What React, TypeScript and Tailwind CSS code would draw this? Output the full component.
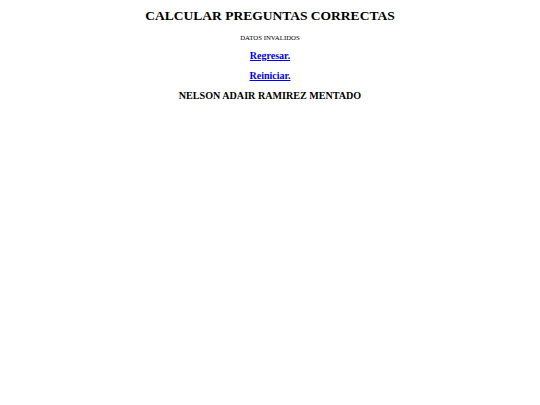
export default function App() {
  return (
    <div className="min-h-[405px] bg-white text-black text-center font-['Liberation_Serif',serif]">
      <h1 className="pt-[8px] text-[13.5px] leading-[16px] font-bold">CALCULAR PREGUNTAS CORRECTAS</h1>
      <p className="mt-[10px] text-[6.8px] leading-[8px]">DATOS INVALIDOS</p>
      <p className="mt-[8px] text-[10px] leading-[12px] font-bold">
        <a href="#" className="text-[#0000ee] underline">Regresar.</a>
      </p>
      <p className="mt-[8px] text-[10px] leading-[12px] font-bold">
        <a href="#" className="text-[#0000ee] underline">Reiniciar.</a>
      </p>
      <p className="mt-[8px] text-[10.1px] leading-[12px] font-bold">NELSON ADAIR RAMIREZ MENTADO</p>
    </div>
  );
}
